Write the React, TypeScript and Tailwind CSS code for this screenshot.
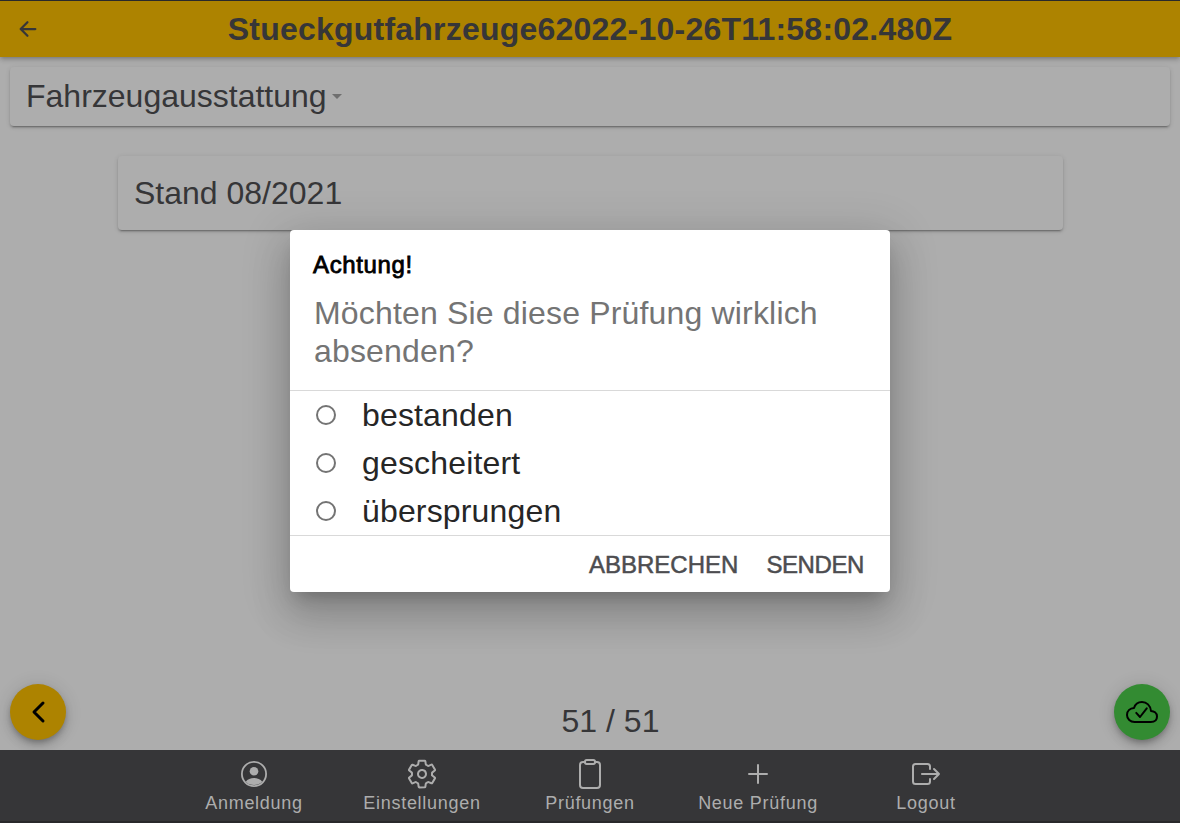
import React from "react";
import {
  IoAddOutline,
  IoArrowBack,
  IoClipboardOutline,
  IoExitOutline,
  IoSettingsOutline,
} from "react-icons/io5";

const ProfileIcon = () => (
  <svg viewBox="0 0 26 26" className="size-[26px]" fill="none">
    <circle cx="13" cy="13" r="12.1" stroke="currentColor" strokeWidth="1.8" />
    <circle cx="13" cy="10.2" r="4.3" fill="currentColor" />
    <path d="M4.8 20.7C6.4 18 9.8 16.9 13 16.9s6.6 1.1 8.2 3.8A12 12 0 0 1 4.8 20.7Z" fill="currentColor" />
  </svg>
);

const ChevronIcon = () => (
  <svg viewBox="0 0 32 32" className="size-8" fill="none">
    <path d="m21 7-9 9 9 9" stroke="currentColor" strokeWidth="3" strokeLinecap="round" strokeLinejoin="round" />
  </svg>
);

const CloudDoneIcon = () => (
  <svg viewBox="0 0 512 512" className="size-8" fill="none" stroke="currentColor" strokeWidth="32">
    <path
      d="M400 240c-8.89-89.54-71-144-144-144-69 0-113.44 48.2-128 96-60 6-112 43.59-112 112 0 66 54 112 120 112h260c55 0 100-27.44 100-88 0-59.82-53-85.76-96-88z"
      strokeLinejoin="round"
    />
    <path d="m164 270 60 66 108-138" strokeLinecap="round" strokeLinejoin="round" />
  </svg>
);

const tabs = [
  { label: "Anmeldung", icon: <ProfileIcon /> },
  { label: "Einstellungen", icon: <IoSettingsOutline className="size-8" /> },
  { label: "Prüfungen", icon: <IoClipboardOutline className="size-8" /> },
  { label: "Neue Prüfung", icon: <IoAddOutline className="size-8" /> },
  { label: "Logout", icon: <IoExitOutline className="size-8" /> },
];

const options = ["bestanden", "gescheitert", "übersprungen"];

const cardShadow =
  "shadow-[0_3px_1px_-2px_rgba(0,0,0,0.2),0_2px_2px_0_rgba(0,0,0,0.14),0_1px_5px_0_rgba(0,0,0,0.12)]";

function Dialog() {
  return (
    <div
      role="dialog"
      className="absolute left-[290px] top-[229px] flex h-[362px] w-[600px] flex-col rounded bg-white shadow-[0_11px_15px_-7px_rgba(0,0,0,0.2),0_24px_38px_3px_rgba(0,0,0,0.14),0_9px_46px_8px_rgba(0,0,0,0.12)]"
    >
      <div className="h-[160px] px-6 pt-[20px]">
        <h2 className="-ml-px text-[24px] leading-[30px] tracking-[0.65px] text-black [-webkit-text-stroke:0.8px_black]">
          Achtung!
        </h2>
        <p className="mt-[14px] text-[32px] leading-[38px] tracking-[0.17px] text-[#747474]">
          Möchten Sie diese Prüfung wirklich absenden?
        </p>
      </div>
      <div className="h-[146px] border-y border-[#d9d9d9]">
        {options.map((label) => (
          <label key={label} className="flex h-12 items-center pl-[26px]">
            <span className="size-5 rounded-full border-2 border-[#747474]" />
            <span className="ml-[26px] text-[32px] leading-[48px] tracking-[0.16px] text-[#262626]">{label}</span>
          </label>
        ))}
      </div>
      <div className="flex h-14 items-center justify-end gap-7 pr-[26px] text-[24px] text-[#4d4d50] [-webkit-text-stroke:0.5px_#4d4d50]">
        <button className="mt-px">ABBRECHEN</button>
        <button className="mt-px tracking-[-0.4px]">SENDEN</button>
      </div>
    </div>
  );
}

export default function App() {
  return (
    <div className="relative flex h-[823px] w-[1180px] flex-col overflow-hidden border-t border-[#29292b] bg-[#adadad] font-['Liberation_Sans',Arial,sans-serif] text-[#363638]">
      <header className="z-10 grid h-14 shrink-0 grid-cols-[56px_1fr_56px] items-center bg-[#ad8300] shadow-[0_2px_4px_-1px_rgba(0,0,0,0.2),0_4px_5px_0_rgba(0,0,0,0.06),0_1px_6px_0_rgba(0,0,0,0.12)]">
        <IoArrowBack className="ml-4 size-6" />
        <h1 className="whitespace-nowrap text-center text-[32px] font-bold leading-[56px] tracking-[0.22px]">
          Stueckgutfahrzeuge62022-10-26T11:58:02.480Z
        </h1>
      </header>

      <main className="flex flex-1 flex-col">
        <div className={`mx-2.5 mt-2.5 flex h-[59px] items-center rounded pl-4 text-[32px] ${cardShadow} bg-[#adadad]`}>
          <span className="-mt-px">Fahrzeugausstattung</span>
          <svg viewBox="0 0 10 5" className="ml-[5px] h-[5px] w-2.5 text-[#6f6f6f]">
            <path d="M0 0h10L5 5Z" fill="currentColor" />
          </svg>
        </div>
        <div className={`ml-[118px] mt-[30px] flex h-[74px] w-[945px] items-center rounded pl-4 text-[32px] ${cardShadow} bg-[#adadad]`}>
          <span>Stand 08/2021</span>
        </div>
        <div className="mt-auto grid grid-cols-[56px_1fr_56px] items-end px-2.5 pb-2.5">
          <button className="flex size-14 items-center justify-center rounded-full bg-[#ad8300] text-black shadow-[0_3px_5px_-1px_rgba(0,0,0,0.2),0_6px_10px_0_rgba(0,0,0,0.14),0_1px_18px_0_rgba(0,0,0,0.12)]">
            <ChevronIcon />
          </button>
          <span className="-mb-[5px] pl-[41px] text-center text-[32px] leading-[48px]">51 / 51</span>
          <button className="flex size-14 items-center justify-center rounded-full bg-[#338b32] text-black shadow-[0_3px_5px_-1px_rgba(0,0,0,0.2),0_6px_10px_0_rgba(0,0,0,0.14),0_1px_18px_0_rgba(0,0,0,0.12)]">
            <CloudDoneIcon />
          </button>
        </div>
      </main>

      <nav className="z-10 flex h-[73px] shrink-0 justify-center border-b-2 border-[#29292b] bg-[#363638] text-[#adadad]">
        {tabs.map((t) => (
          <a key={t.label} className="flex w-[168px] flex-col items-center pt-2">
            <span className="flex size-8 items-center justify-center">{t.icon}</span>
            <span className="mt-px text-[18px] leading-6 tracking-[0.72px]">{t.label}</span>
          </a>
        ))}
      </nav>

      <Dialog />
    </div>
  );
}
